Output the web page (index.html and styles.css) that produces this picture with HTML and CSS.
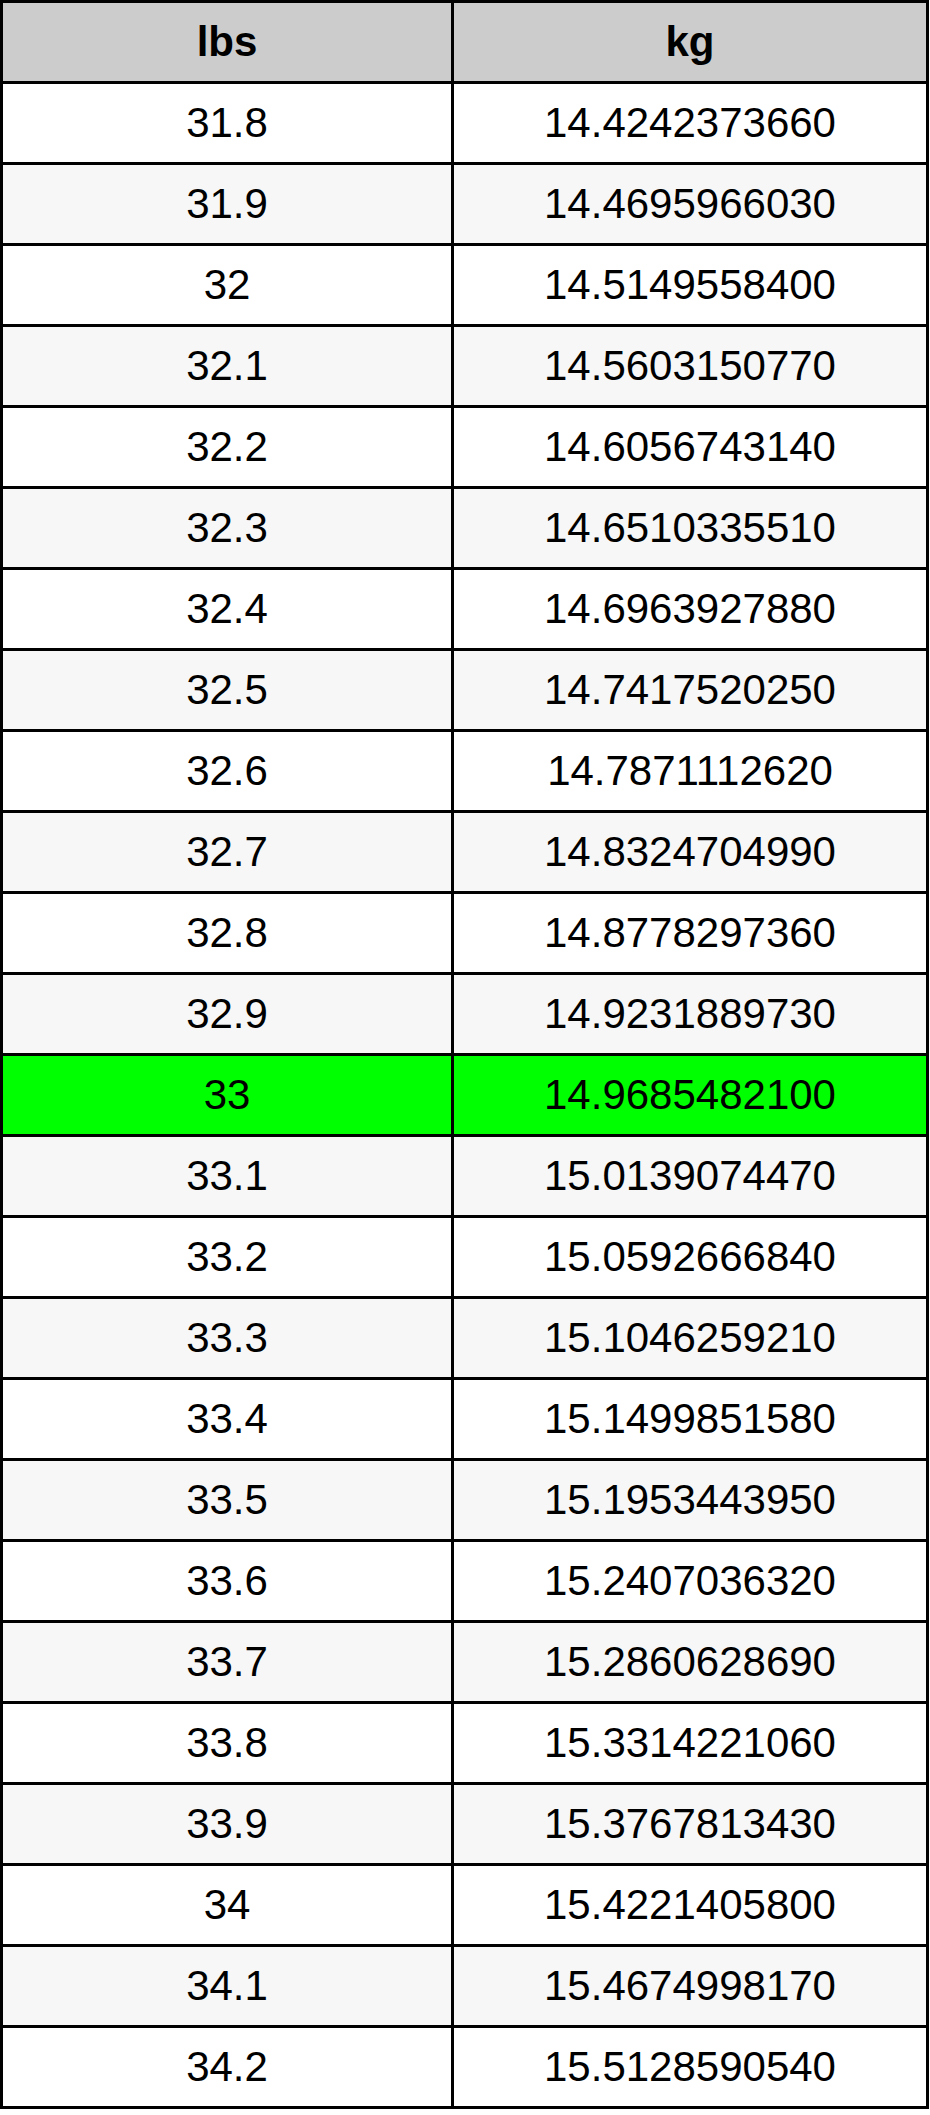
FILE: index.html
```html
<!DOCTYPE html>
<html>
<head>
<meta charset="utf-8">
<link rel="stylesheet" href="styles.css">
</head>
<body>
<table class="conv">
<thead>
<tr><th class="c1">lbs</th><th class="c2">kg</th></tr>
</thead>
<tbody>
<tr><td>31.8</td><td>14.4242373660</td></tr>
<tr class="alt"><td>31.9</td><td>14.4695966030</td></tr>
<tr><td>32</td><td>14.5149558400</td></tr>
<tr class="alt"><td>32.1</td><td>14.5603150770</td></tr>
<tr><td>32.2</td><td>14.6056743140</td></tr>
<tr class="alt"><td>32.3</td><td>14.6510335510</td></tr>
<tr><td>32.4</td><td>14.6963927880</td></tr>
<tr class="alt"><td>32.5</td><td>14.7417520250</td></tr>
<tr><td>32.6</td><td>14.7871112620</td></tr>
<tr class="alt"><td>32.7</td><td>14.8324704990</td></tr>
<tr><td>32.8</td><td>14.8778297360</td></tr>
<tr class="alt"><td>32.9</td><td>14.9231889730</td></tr>
<tr class="hl"><td>33</td><td>14.9685482100</td></tr>
<tr class="alt"><td>33.1</td><td>15.0139074470</td></tr>
<tr><td>33.2</td><td>15.0592666840</td></tr>
<tr class="alt"><td>33.3</td><td>15.1046259210</td></tr>
<tr><td>33.4</td><td>15.1499851580</td></tr>
<tr class="alt"><td>33.5</td><td>15.1953443950</td></tr>
<tr><td>33.6</td><td>15.2407036320</td></tr>
<tr class="alt"><td>33.7</td><td>15.2860628690</td></tr>
<tr><td>33.8</td><td>15.3314221060</td></tr>
<tr class="alt"><td>33.9</td><td>15.3767813430</td></tr>
<tr><td>34</td><td>15.4221405800</td></tr>
<tr class="alt"><td>34.1</td><td>15.4674998170</td></tr>
<tr><td>34.2</td><td>15.5128590540</td></tr>
</tbody>
</table>
</body>
</html>
```
FILE: styles.css
```css
html, body {
  margin: 0;
  padding: 0;
  background: #ffffff;
}

.conv {
  border-collapse: separate;
  border-spacing: 0;
  border-top: 3px solid #000;
  border-left: 3px solid #000;
  table-layout: fixed;
  width: 929px;
  font-family: "Liberation Sans", Arial, sans-serif;
  font-size: 42px;
  color: #000;
}

.conv th,
.conv td {
  border-right: 3px solid #000;
  border-bottom: 3px solid #000;
  height: 78px;
  padding: 0;
  text-align: center;
  vertical-align: middle;
  box-sizing: content-box;
}

.conv th {
  background: #cccccc;
  font-weight: bold;
}

.conv .c1 {
  width: 448px;
}

.conv .c2 {
  width: 472px;
}

.conv tr.alt td {
  background: #f7f7f7;
}

.conv tr.hl td {
  background: #00ff00;
}
```
